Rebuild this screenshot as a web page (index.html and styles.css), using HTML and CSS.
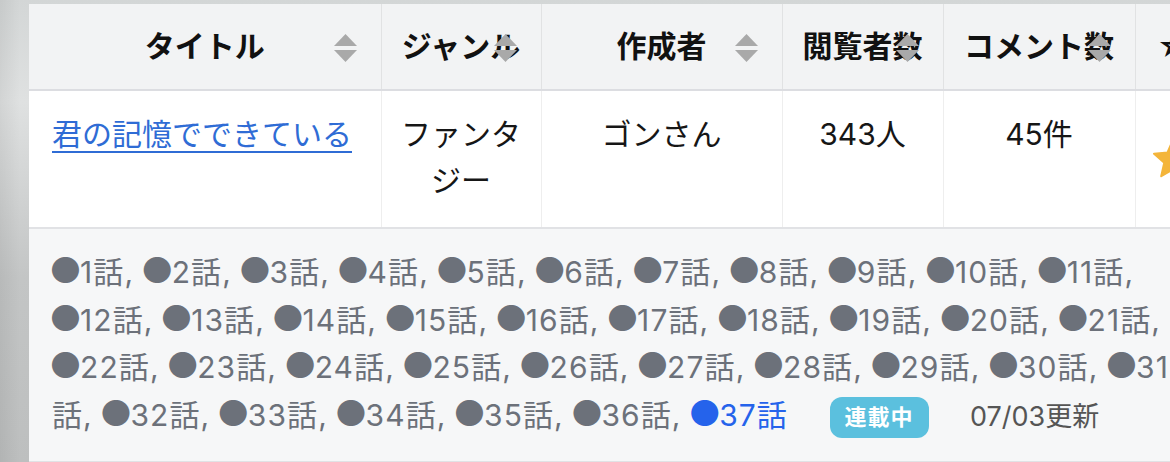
FILE: index.html
```html
<!DOCTYPE html>
<html lang="ja">
<head>
  <meta charset="UTF-8">
  <meta name="viewport" content="width=device-width, initial-scale=1.0">
  <title>作品一覧</title>

  <link rel="stylesheet" href="styles.css">
</head>
<body>

<div class="NovelList">
  <table class="novelTable">
    <colgroup>
      <col class="colTitle">
      <col class="colGenre">
      <col class="colAuthor">
      <col class="colViews">
      <col class="colComments">
      <col class="colFav">
    </colgroup>
    <thead>
      <tr>
        <th class="sortable">タイトル<svg class="sortIcon" viewBox="0 0 23 28"><polygon points="0,12 11.5,0 23,12"/><polygon points="0,16 23,16 11.5,28"/></svg></th>
        <th class="sortable">ジャンル<svg class="sortIcon" viewBox="0 0 23 28"><polygon points="0,12 11.5,0 23,12"/><polygon points="0,16 23,16 11.5,28"/></svg></th>
        <th class="sortable">作成者<svg class="sortIcon" viewBox="0 0 23 28"><polygon points="0,12 11.5,0 23,12"/><polygon points="0,16 23,16 11.5,28"/></svg></th>
        <th class="sortable">閲覧者数<svg class="sortIcon" viewBox="0 0 23 28"><polygon points="0,12 11.5,0 23,12"/><polygon points="0,16 23,16 11.5,28"/></svg></th>
        <th class="sortable">コメント数<svg class="sortIcon" viewBox="0 0 23 28"><polygon points="0,12 11.5,0 23,12"/><polygon points="0,16 23,16 11.5,28"/></svg></th>
        <th class="fav">☆</th>
      </tr>
    </thead>
    <tbody>
      <tr class="novelRow">
        <td class="title"><a href="#">君の記憶でできている</a></td>
        <td>ファンタジー</td>
        <td>ゴンさん</td>
        <td>343人</td>
        <td>45件</td>
        <td class="fav">
          <svg class="favStar" viewBox="0 0 40 40"><polygon points="20,2 25.2,13.8 38,15 28.3,23.6 31.2,36.4 20,29.7 8.8,36.4 11.7,23.6 2,15 14.8,13.8"/></svg>
        </td>
      </tr>
      <tr class="episodeRow">
        <td colspan="6">
          <a class="ep" href="#"><span class="mark">●</span>1話</a>, <a class="ep" href="#"><span class="mark">●</span>2話</a>, <a class="ep" href="#"><span class="mark">●</span>3話</a>, <a class="ep" href="#"><span class="mark">●</span>4話</a>, <a class="ep" href="#"><span class="mark">●</span>5話</a>, <a class="ep" href="#"><span class="mark">●</span>6話</a>, <a class="ep" href="#"><span class="mark">●</span>7話</a>, <a class="ep" href="#"><span class="mark">●</span>8話</a>, <a class="ep" href="#"><span class="mark">●</span>9話</a>, <a class="ep" href="#"><span class="mark">●</span>10話</a>, <a class="ep" href="#"><span class="mark">●</span>11話</a>, <a class="ep" href="#"><span class="mark">●</span>12話</a>, <a class="ep" href="#"><span class="mark">●</span>13話</a>, <a class="ep" href="#"><span class="mark">●</span>14話</a>, <a class="ep" href="#"><span class="mark">●</span>15話</a>, <a class="ep" href="#"><span class="mark">●</span>16話</a>, <a class="ep" href="#"><span class="mark">●</span>17話</a>, <a class="ep" href="#"><span class="mark">●</span>18話</a>, <a class="ep" href="#"><span class="mark">●</span>19話</a>, <a class="ep" href="#"><span class="mark">●</span>20話</a>, <a class="ep" href="#"><span class="mark">●</span>21話</a>, <a class="ep" href="#"><span class="mark">●</span>22話</a>, <a class="ep" href="#"><span class="mark">●</span>23話</a>, <a class="ep" href="#"><span class="mark">●</span>24話</a>, <a class="ep" href="#"><span class="mark">●</span>25話</a>, <a class="ep" href="#"><span class="mark">●</span>26話</a>, <a class="ep" href="#"><span class="mark">●</span>27話</a>, <a class="ep" href="#"><span class="mark">●</span>28話</a>, <a class="ep" href="#"><span class="mark">●</span>29話</a>, <a class="ep" href="#"><span class="mark">●</span>30話</a>, <a class="ep" href="#"><span class="mark">●</span>31話</a>, <a class="ep" href="#"><span class="mark">●</span>32話</a>, <a class="ep" href="#"><span class="mark">●</span>33話</a>, <a class="ep" href="#"><span class="mark">●</span>34話</a>, <a class="ep" href="#"><span class="mark">●</span>35話</a>, <a class="ep" href="#"><span class="mark">●</span>36話</a>, <a class="ep latest" href="#"><span class="mark">●</span>37話</a>
          <span class="badge">連載中</span>
          <span class="updated">07/03更新</span>
        </td>
      </tr>
    </tbody>
  </table>
</div>

</body>
</html>
```

FILE: styles.css
```css
html,
body {
  margin: 0;
  height: 100%;
}

body {
  font-family: "Inter", "Noto Sans CJK JP", sans-serif;
  color: #161616;
  overflow: hidden;
  background:
    linear-gradient(to right, rgba(0, 0, 0, 0.06), rgba(0, 0, 0, 0) 20px),
    linear-gradient(to bottom, #d3d6d6 0%, #dfe1e1 22%, #d2d4d4 40%, #c3c5c5 60%, #bdbfbf 100%);
}

.NovelList {
  padding: 4px 0 0 29px;
}

.novelTable {
  border-collapse: collapse;
  table-layout: fixed;
  width: 1182px;
  background-color: #fff;
}

.colTitle { width: 352px; }
.colGenre { width: 160px; }
.colAuthor { width: 241px; }
.colViews { width: 161px; }
.colComments { width: 192px; }
.colFav { width: 76px; }

th {
  position: relative;
  padding: 20px 0;
  font-size: 30px;
  line-height: 45px;
  font-weight: bold;
  text-align: center;
  color: #111;
  background-color: #f2f3f4;
  border-right: 1px solid #e1e2e3;
  border-bottom: 2px solid #dcdde1;
}

.sortIcon {
  position: absolute;
  right: 24px;
  top: 30px;
  width: 23px;
  height: 28px;
  fill: #a9a9a9;
}

td {
  padding: 20px 18px 24px;
  font-size: 30px;
  line-height: 46px;
  text-align: center;
  vertical-align: top;
  border-right: 1px solid #eeeeee;
}

td.title {
  text-align: left;
  padding-left: 23px;
}

td.title a {
  color: #2f6cd5;
  text-decoration-thickness: 2px;
  text-underline-offset: 6px;
}

td.fav {
  padding: 0;
  vertical-align: middle;
}

.favStar {
  display: block;
  width: 42px;
  height: 42px;
  margin: 0 auto;
  fill: #f4b53a;
  stroke: #f4b53a;
  stroke-width: 2;
  stroke-linejoin: round;
}

.episodeRow td {
  padding: 20px 16px 21px 23px;
  line-height: 47.5px;
  text-align: left;
  color: #6c717a;
  background-color: #f6f7f8;
  border-top: 2px solid #e1e2e5;
  border-bottom: 2px solid #e1e2e5;
  letter-spacing: 1.1px;
}

.ep {
  color: #6c717a;
  text-decoration: none;
}

.ep .mark {
  font-size: 36px;
  line-height: 1;
  margin: 0 -3px;
}

.ep.latest {
  color: #2563eb;
}

.badge {
  display: inline-block;
  margin: 0 32px 0 32px;
  padding: 0 15px;
  font-size: 22px;
  line-height: 41px;
  font-weight: bold;
  letter-spacing: 1px;
  color: #fff;
  background-color: #5bc0de;
  border-radius: 12px;
  vertical-align: 1px;
}

.updated {
  font-size: 27px;
  letter-spacing: 0;
  color: #555;
}
```
